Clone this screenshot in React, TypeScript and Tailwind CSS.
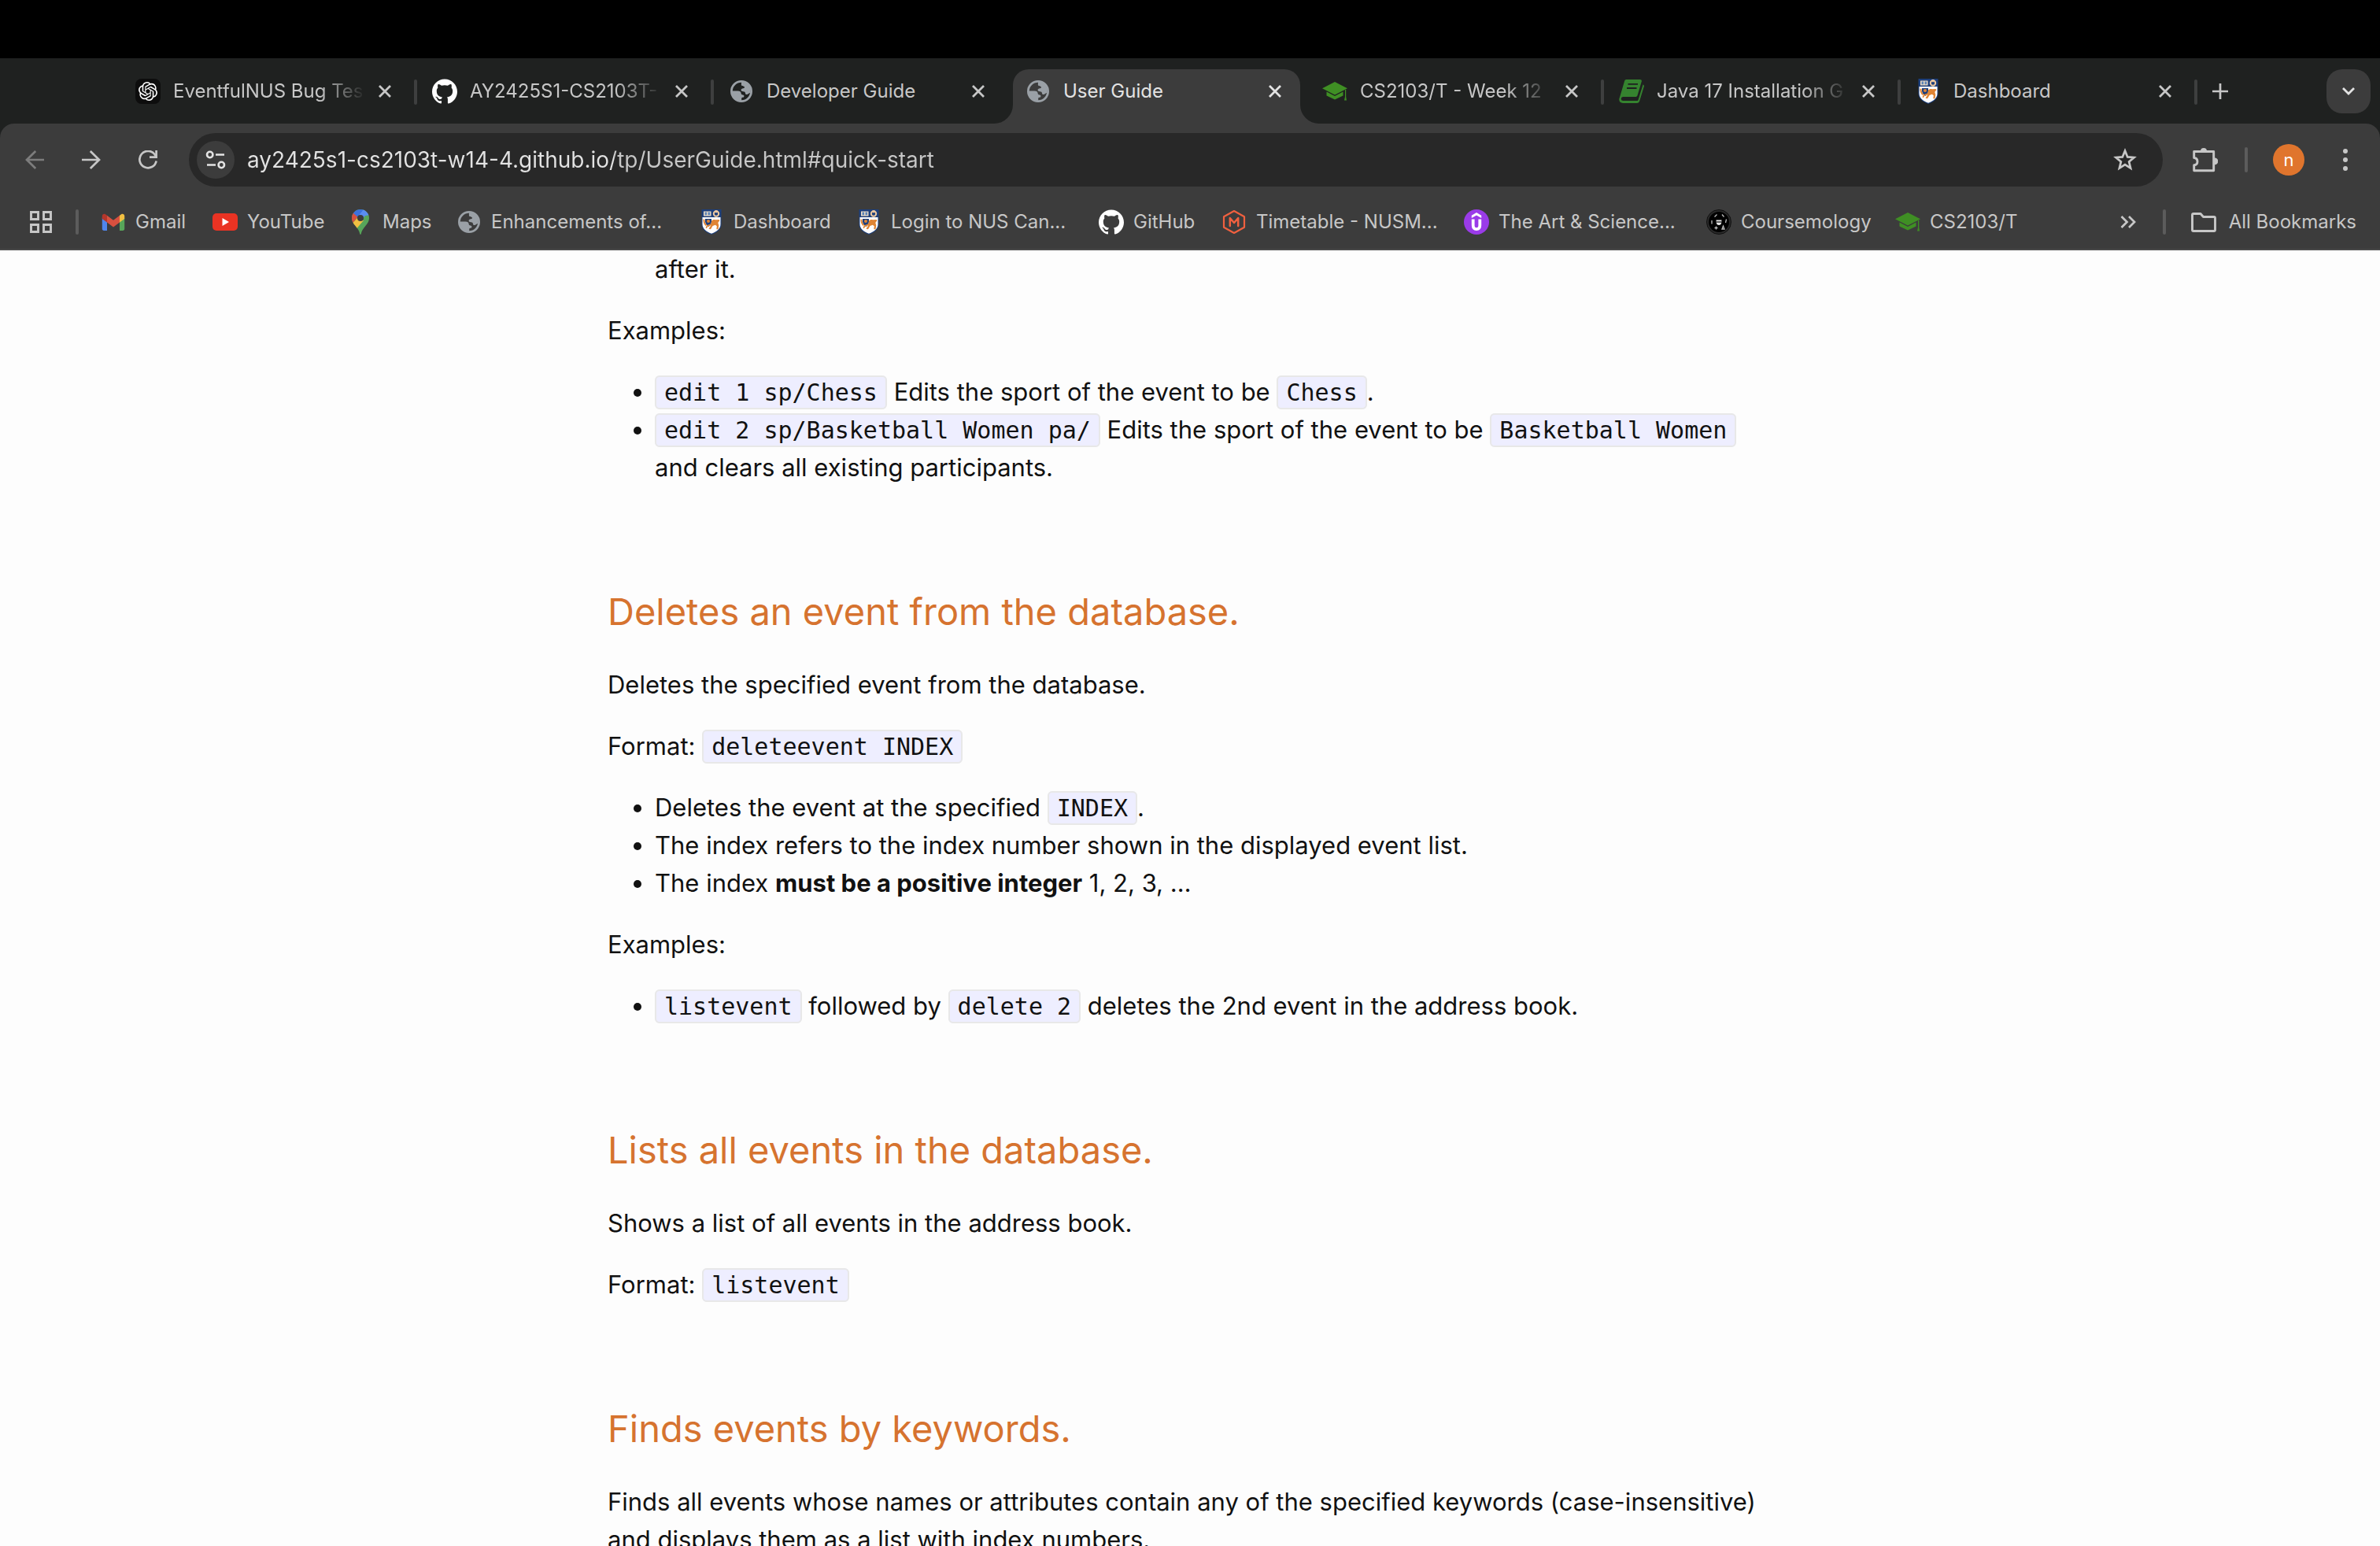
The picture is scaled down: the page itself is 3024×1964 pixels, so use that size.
import type { ReactNode } from "react";
import { SiOpenai, SiGithub } from "react-icons/si";

function GlobeIcon() {
  return (
    <svg viewBox="0 0 28 28" className="size-7 text-[#9aa0a6]" aria-hidden="true">
      <circle cx="14" cy="14" r="12.6" fill="none" stroke="currentColor" strokeWidth="2.8" />
      <path
        fill="currentColor"
        d="M14 3.5c-.2 1.500-.3 2.600.6 3.400 1 .8 2.600.4 3.200 1.300.5 1-.3 2-1.600 2.100-1.600.1-2.600.9-2.600 2.200 0 1.200 1 1.700 2.700 1.700 1.800 0 2.500.8 2.700 2.200.2 1.300 1 1.800 2.300 1.500 1.500-.4 2-1.600 4.200-1.900C27 8 21 1 14 2.200Z"
      />
      <path
        fill="currentColor"
        d="M2 13.600h7.600c2.400 0 3.900 1.200 4.100 3.200.1 1.200.8 1.700 2 1.700 1.300 0 1.900.7 1.700 2-.1.900-.8 1.300-1.700 1.300-1 0-1.500.5-1.500 1.500v3.200C7 27 1.500 21 2 13.600Z"
      />
    </svg>
  );
}

function ChatIcon() {
  return (
    <span className="flex size-8 items-center justify-center rounded-lg bg-[#0d0d0d]">
      <SiOpenai className="size-6 text-white" aria-hidden="true" />
    </span>
  );
}

function GitHubIcon() {
  return <SiGithub className="size-8 text-white" aria-hidden="true" />;
}

function CapIcon() {
  return (
    <svg viewBox="0 0 32 32" className="size-8" fill="#3f8f24" aria-hidden="true">
      <path d="M16 4 32 12.200 16 20.500 0 12.200Z" />
      <path d="M5.500 16.500 16 22l10.500-5.500v5L16 26.500 5.500 21.500Z" />
      <path d="M29 14h1.200v9l.8 4.500h-3l1-4.500Z" />
    </svg>
  );
}

function BookIcon() {
  return (
    <svg viewBox="0 0 32 32" className="size-8" aria-hidden="true">
      <path
        fill="#35832f"
        d="M9.500 1h17.300c1.500 0 2.400 1 2 2.500l-5.300 17.700c-.4 1.200-1.200 1.800-2.500 1.800H5.500c-1.700 0-2.700 1-2.700 2.500 0 1.700 1 2.500 2.700 2.500h17.300c1 0 1.500-.4 1.800-1.300L30.500 7.500c1.300.5 1.700 1.300 1.300 2.600l-5.500 18c-.5 1.900-1.700 2.900-3.500 2.900H5C2 31 0 28.800.3 26c0-1 .4-1.800.8-2.800L7 3.200C7.400 1.700 8.200 1 9.500 1Z"
      />
      <path stroke="#1f2020" strokeWidth="1.800" d="M11.500 6.800h12.500M10 12h12.500" />
    </svg>
  );
}

function CrestIcon() {
  return (
    <svg viewBox="0 0 32 32" className="size-8" aria-hidden="true">
      <path fill="#1d3f7c" d="M3.500 0h25v18.500c0 6.500-4.500 10.500-12.500 13.500C8 29 3.500 25 3.500 18.500Z" />
      <path fill="#fff" d="M4.500 10h23v8.500c0 6-4.200 9.500-11.500 12.300C8.700 28 4.500 24.500 4.500 18.500Z" />
      <path fill="#eddcc6" d="M6 2.500h9.500v6H6Z" />
      <path fill="#5b83b8" d="M7.500 3.500h2.600v3.700H7.500zM11.500 3.500h2.600v3.700h-2.600z" />
      <circle cx="22" cy="5.500" r="3.200" fill="none" stroke="#eec9a0" strokeWidth="2" />
      <path fill="#eec9a0" d="M20.500 1.200h3v3h-3z" />
      <path fill="#1d3f7c" d="M8 12h8v3.500c0 2.500-1.500 4.500-3.500 6.500C10 20 8 18 8 15.500Z" />
      <circle cx="12" cy="15" r="2" fill="#df8434" />
      <path
        fill="#df8434"
        d="M5.500 12.500l2 .2c-.2 2.800.6 5 2.500 7l-1.500 1.300c-2.400-2.500-3.200-5.300-3-8.500ZM16 14.500c1.500-1.700 3.300-2 5-1.200l4.500-.2c1 .5 1 2-.2 2.400l-1 1.500 1 3.300-.8 5h-2.200l.5-4-2-1.500-3.300 1.200-2.500 4.300-2.500-.6 2.800-4.500-4 1.500-1.500 2.500-1.300-1 1.500-3c2-.8 4-1 5.500-2.300Z"
      />
    </svg>
  );
}

function GmailIcon() {
  return (
    <svg viewBox="0 0 32 32" className="size-8" aria-hidden="true">
      <path fill="#4f86ec" d="M1.800 10.500 8 15v12H4c-1.300 0-2.200-.9-2.200-2.200Z" />
      <path fill="#57a55a" d="M30.200 10.500 24 15v12h4c1.300 0 2.200-.9 2.200-2.200Z" />
      <path fill="#f1bf42" d="M24 7.800 26 6.200c2-1.300 4.200 0 4.200 2.300V12L24 16.500Z" />
      <path fill="#b3362b" d="M8 7.800 6 6.200C4 4.900 1.800 6.200 1.800 8.500V12L8 16.500Z" />
      <path fill="#d8503f" d="M8 7.800 16 13.800 24 7.800v8.700L16 22.400 8 16.500Z" />
    </svg>
  );
}

function YouTubeIcon() {
  return (
    <svg viewBox="0 0 32 32" className="size-8" aria-hidden="true">
      <rect y="5" width="32" height="22" rx="5" fill="#ea3323" />
      <path fill="#fff" d="m12.500 11 8.500 5-8.500 5Z" />
    </svg>
  );
}

function MapsIcon() {
  return (
    <svg viewBox="0 0 32 32" className="size-8" aria-hidden="true">
      <defs>
        <clipPath id="pin">
          <path d="M16 0a11 11 0 0 1 11 11c0 4.500-2.500 7.300-5 10.500S17.500 27 16.800 31c-.3 1.200-1.300 1.200-1.600 0-.7-4-2.700-6.300-5.200-9.500S5 15.500 5 11A11 11 0 0 1 16 0Z" />
        </clipPath>
      </defs>
      <g clipPath="url(#pin)">
        <path fill="#57a55a" d="M0 0h32v32H0Z" />
        <path fill="#f1bf42" d="M0 14 5.500 18 12 11l8 3L8 28 0 24Z" />
        <path fill="#d8503f" d="M0 3h8l5 6L6 17.500 0 18Z" />
        <path fill="#3b71de" d="M5 0h16l-8 10-6.500-5.500Z" />
        <path fill="#5a8df0" d="M20 0h8v7l-6 1-5 6-5-4Z" />
      </g>
      <circle cx="16" cy="11" r="4" fill="#3c3c3c" />
    </svg>
  );
}

function NusModsIcon() {
  return (
    <svg viewBox="0 0 32 32" className="size-8" fill="none" stroke="#f0603f" strokeLinejoin="round" strokeLinecap="round" aria-hidden="true">
      <path strokeWidth="2.200" d="M16 2 29 9.200v13.600L16 30 3 22.800V9.200Z" />
      <path strokeWidth="2.500" d="M10.800 21V11l5.200 6 5.200-6v10" />
    </svg>
  );
}

function UdemyIcon() {
  return (
    <svg viewBox="0 0 32 32" className="size-8" aria-hidden="true">
      <circle cx="16" cy="16" r="16" fill="#9a3be8" />
      <path fill="#fff" d="M16 4 22.200 7.800v3.200L16 7.500 9.800 11V7.800Z" />
      <path fill="none" stroke="#fff" strokeWidth="3.800" d="M11.700 12.500v7.800c0 3 1.500 4.800 4.300 4.800s4.300-1.800 4.300-4.800v-7.800" />
    </svg>
  );
}

function CoursemologyIcon() {
  return (
    <svg viewBox="0 0 32 32" className="size-8" aria-hidden="true">
      <circle cx="16" cy="16" r="15.500" fill="#2a2a2a" stroke="#111" />
      <circle cx="16" cy="16" r="13" fill="#000" />
      <path fill="#e8e8e8" d="M12.500 13.500h7l-.5 4.500c-.5 1.300-1.500 2-3 2s-2.500-.7-3-2Z" />
      <path stroke="#000" strokeWidth="1.200" d="M13 16h6" />
      <g fill="none" stroke="#bdbdbd" strokeWidth="1.300">
        <path d="M10.500 9.500l3-3M20 6.500l2.500 3M7 14v4.500M25.500 12.500l-1 4.500M20 25l1.500-4 1.500 4ZM10.500 23.500h4M12.500 21.500v4" />
      </g>
    </svg>
  );
}

function TuneIcon() {
  return (
    <svg viewBox="0 0 28 28" className="size-7" fill="none" stroke="#e3e3e3" strokeWidth="2.600" aria-hidden="true">
      <circle cx="6.700" cy="7.500" r="3.700" />
      <path d="M14 7.500h11M3 20.500h11" />
      <circle cx="21.300" cy="20.500" r="3.700" />
    </svg>
  );
}

function ArrowIcon({ flip }: { flip?: boolean }) {
  return (
    <svg viewBox="0 0 24 24" className="size-6" fill="none" stroke="currentColor" strokeWidth="2.700" aria-hidden="true">
      {flip ? <path d="M24 12H2M13.200 1 2 12l11.200 11" /> : <path d="M0 12h22M10.800 1 22 12 10.800 23" />}
    </svg>
  );
}

function ReloadIcon() {
  return (
    <svg viewBox="0 0 24 24" className="size-6" fill="none" stroke="currentColor" strokeWidth="2.700" aria-hidden="true">
      <path d="M22.600 13.500A10.700 10.700 0 1 1 20.500 5l2 3.500" />
      <path d="M22.600 0v8.700h-8.600" />
    </svg>
  );
}

function CloseIcon() {
  return (
    <svg viewBox="0 0 16 16" className="size-4" stroke="currentColor" strokeWidth="2.800" aria-hidden="true">
      <path d="M1 1l14 14M15 1 1 15" />
    </svg>
  );
}

function StarIcon() {
  return (
    <svg viewBox="0 0 32 32" className="size-8" fill="none" stroke="currentColor" strokeWidth="2.700" aria-hidden="true">
      <path d="M16 4.500 19.200 12.400 27.500 13l-6.400 5.400 2 8.200L16 22.200l-7.100 4.400 2-8.200L4.500 13l8.300-.6Z" />
    </svg>
  );
}

function PuzzleIcon() {
  return (
    <svg viewBox="0 0 32 32" className="size-8" aria-hidden="true">
      <path
        fill="none"
        stroke="currentColor"
        strokeWidth="2.900"
        strokeLinejoin="round"
        d="M3.500 5.500h23.200v24.300H1.700v-7c2.700-.2 4.300-2 4.300-4.600s-1.600-4.500-4.300-4.700V5.500Z"
      />
      <path fill="currentColor" d="M10 5a4 4 0 0 1 8 0ZM28 13.500a4.200 4.200 0 0 1 0 8.700Z" />
    </svg>
  );
}

function FolderIcon() {
  return (
    <svg viewBox="0 0 32 32" className="size-8" fill="none" stroke="currentColor" strokeWidth="2.900" strokeLinejoin="round" aria-hidden="true">
      <path d="M3 5.500h9l3.500 4H29c1 0 1.500.5 1.500 1.500v15c0 1-.5 1.500-1.500 1.500H3c-1 0-1.500-.5-1.500-1.500V7C1.500 6 2 5.500 3 5.500Z" />
    </svg>
  );
}

function AppsIcon() {
  return (
    <svg viewBox="0 0 28 28" className="size-7" fill="none" stroke="currentColor" strokeWidth="2.900" aria-hidden="true">
      <path d="M1.500 1.500h9v9h-9zM17.500 1.500h9v9h-9zM1.500 17.500h9v9h-9zM17.500 17.500h9v9h-9z" />
    </svg>
  );
}

function Flare({ side }: { side: "left" | "right" }) {
  return (
    <svg
      viewBox="0 0 24 24"
      fill="#3c3c3c"
      aria-hidden="true"
      className={side === "left" ? "absolute right-full bottom-0 size-6" : "absolute bottom-0 left-full size-6"}
    >
      {side === "left" ? <path d="M24 0v24H0A24 24 0 0 0 24 0Z" /> : <path d="M0 0v24h24A24 24 0 0 1 0 0Z" />}
    </svg>
  );
}

type TabInfo = { title: string; icon: ReactNode; active?: boolean; fade?: boolean; divider?: boolean };

const tabs: TabInfo[] = [
  { title: "EventfulNUS Bug Tes", icon: <ChatIcon />, fade: true, divider: true },
  { title: "AY2425S1-CS2103T-", icon: <GitHubIcon />, fade: true, divider: true },
  { title: "Developer Guide", icon: <GlobeIcon /> },
  { title: "User Guide", icon: <GlobeIcon />, active: true },
  { title: "CS2103/T - Week 12", icon: <CapIcon />, fade: true, divider: true },
  { title: "Java 17 Installation G", icon: <BookIcon />, fade: true, divider: true },
  { title: "Dashboard", icon: <CrestIcon />, divider: true },
];

function Tab({ title, icon, active, fade, divider }: TabInfo) {
  return (
    <li className="flex w-[377px] min-w-0 items-end gap-[5px] pr-px pl-0.5">
      <div
        className={
          active
            ? "relative flex h-[69px] min-w-0 flex-1 rounded-t-[20px] bg-[#3c3c3c] pr-6 pl-4 text-[#e3e3e3]"
            : "relative flex h-[69px] min-w-0 flex-1 pr-6 pl-4 text-[#c7c7c7]"
        }
      >
        {active && <Flare side="left" />}
        {active && <Flare side="right" />}
        <div className="flex h-14 min-w-0 flex-1 items-center">
          <span className="flex w-8 shrink-0 items-center justify-center">{icon}</span>
          <a
            href="#quick-start"
            className={
              fade
                ? "ml-4 min-w-0 flex-1 overflow-hidden whitespace-nowrap [mask-image:linear-gradient(to_right,#000_calc(100%-60px),transparent)]"
                : "ml-4 min-w-0 flex-1 overflow-hidden whitespace-nowrap"
            }
          >
            {title}
          </a>
          <button type="button" aria-label={"Close " + title} className="ml-4 shrink-0">
            <CloseIcon />
          </button>
        </div>
      </div>
      <span className={divider ? "mb-6 h-8 w-1 rounded-full bg-[#3e3f3f]" : "w-1"} />
    </li>
  );
}

const bookmarks: { title: string; icon: ReactNode; width: string }[] = [
  { title: "Gmail", icon: <GmailIcon />, width: "w-[142px]" },
  { title: "YouTube", icon: <YouTubeIcon />, width: "w-[172px]" },
  { title: "Maps", icon: <MapsIcon />, width: "w-[138px]" },
  { title: "Enhancements of...", icon: <GlobeIcon />, width: "w-[308px]" },
  { title: "Dashboard", icon: <CrestIcon />, width: "w-[200px]" },
  { title: "Login to NUS Can...", icon: <CrestIcon />, width: "w-[308px]" },
  { title: "GitHub", icon: <GitHubIcon />, width: "w-[156px]" },
  { title: "Timetable - NUSM...", icon: <NusModsIcon />, width: "w-[308px]" },
  { title: "The Art & Science...", icon: <UdemyIcon />, width: "w-[308px]" },
  { title: "Coursemology", icon: <CoursemologyIcon />, width: "w-[240px]" },
  { title: "CS2103/T", icon: <CapIcon />, width: "w-[190px]" },
];

function Code({ children }: { children: ReactNode }) {
  return (
    <code className="rounded-md border-2 border-[#e8e8e8] bg-[#eeeeff] px-2.5 py-0.5 font-['DejaVu_Sans_Mono',monospace] text-[30px] leading-none">
      {children}
    </code>
  );
}

function Heading({ children }: { children: ReactNode }) {
  return <h3 className="mt-[90px] text-[47px] leading-[78px] text-[#d6732f]">{children}</h3>;
}

function List({ children }: { children: ReactNode }) {
  return <ul className="list-disc pl-[60px]">{children}</ul>;
}

export default function App() {
  return (
    <div className="flex h-screen flex-col overflow-hidden bg-[#fdfdfd] font-['Inter',sans-serif] text-[24px]">
      <div className="h-[74px] shrink-0 bg-black" />

      <header className="shrink-0 bg-[#1f2120]">
        <nav aria-label="Tabs" className="flex h-[83px] items-end pr-3 pl-[154px] text-[#c7c7c7]">
          <ul className="flex min-w-0">
            {tabs.map((tab, i) => (
              <Tab key={i} {...tab} />
            ))}
          </ul>
          <button type="button" aria-label="New tab" className="mb-[13px] flex size-14 items-center justify-center">
            <svg viewBox="0 0 20 20" className="size-5" stroke="currentColor" strokeWidth="2.700" aria-hidden="true">
              <path d="M10 0v20M0 10h20" />
            </svg>
          </button>
          <button
            type="button"
            aria-label="Search tabs"
            className="mb-[13px] ml-auto flex size-14 items-center justify-center rounded-[20px] bg-[#3c3c3c] text-[#e3e3e3]"
          >
            <svg viewBox="0 0 16 10" className="h-2.5 w-4" fill="none" stroke="currentColor" strokeWidth="2.800" aria-hidden="true">
              <path d="M1 1l7 7 7-7" />
            </svg>
          </button>
        </nav>

        <div className="rounded-t-[18px] border-b-2 border-[#4a4a4a] bg-[#3c3c3c] text-[#c7c7c7]">
          <div className="flex items-center pt-3 pr-10">
            <div className="flex w-60 shrink-0 items-center gap-12 pl-8">
              <button type="button" aria-label="Back" disabled className="text-[#7d7d7d]">
                <ArrowIcon flip />
              </button>
              <button type="button" aria-label="Forward">
                <ArrowIcon />
              </button>
              <button type="button" aria-label="Reload">
                <ReloadIcon />
              </button>
            </div>
            <div className="flex h-[68px] min-w-0 flex-1 items-center rounded-full bg-[#282828] pr-8 pl-2.5">
              <button
                type="button"
                aria-label="View site information"
                className="flex size-12 shrink-0 items-center justify-center rounded-full bg-[#3c3c3c]"
              >
                <TuneIcon />
              </button>
              <input
                type="text"
                aria-label="Address"
                defaultValue="ay2425s1-cs2103t-w14-4.github.io/tp/UserGuide.html#quick-start"
                className="ml-4 min-w-0 flex-1 bg-[linear-gradient(to_right,#e3e3e3_466px,#c7c7c7_466px)] bg-clip-text text-[28px] text-transparent outline-none"
              />
              <button type="button" aria-label="Bookmark this page">
                <StarIcon />
              </button>
            </div>
            <button type="button" aria-label="Extensions" className="ml-[38px]">
              <PuzzleIcon />
            </button>
            <span className="ml-[34px] h-8 w-1 rounded-full bg-[#5c5c5c]" />
            <button
              type="button"
              aria-label="Profile"
              className="ml-8 flex size-10 items-center justify-center rounded-full bg-[#e0752d] text-[22px] text-white"
            >
              n
            </button>
            <button type="button" aria-label="Menu" className="ml-12">
              <svg viewBox="0 0 8 28" className="h-7 w-2" fill="currentColor" aria-hidden="true">
                <circle cx="4" cy="3" r="3" />
                <circle cx="4" cy="14" r="3" />
                <circle cx="4" cy="25" r="3" />
              </svg>
            </button>
          </div>

          <nav aria-label="Bookmarks" className="flex h-[79px] items-center pt-2.5 pr-[30px] pl-[38px]">
            <button type="button" aria-label="Apps">
              <AppsIcon />
            </button>
            <span className="ml-[30px] h-8 w-1 shrink-0 rounded-full bg-[#5c5c5c]" />
            <ul className="ml-7 flex">
              {bookmarks.map((b, i) => (
                <li key={i} className={b.width}>
                  <a href="#quick-start" className="flex items-center whitespace-nowrap">
                    <span className="mr-3 flex w-8 shrink-0 items-center justify-center">{b.icon}</span>
                    {b.title}
                  </a>
                </li>
              ))}
            </ul>
            <button type="button" aria-label="More bookmarks" className="ml-auto">
              <svg viewBox="0 0 20 16" className="h-4 w-5" fill="none" stroke="currentColor" strokeWidth="2.700" aria-hidden="true">
                <path d="M1.500 1 8.500 8l-7 7M11 1l7 7-7 7" />
              </svg>
            </button>
            <span className="ml-[34px] h-8 w-1 rounded-full bg-[#5c5c5c]" />
            <button type="button" className="ml-8 flex items-center gap-4 whitespace-nowrap">
              <FolderIcon />
              All Bookmarks
            </button>
          </nav>
        </div>
      </header>

      <main className="min-h-0 flex-1 overflow-hidden px-[60px] text-[31px] leading-[48px] text-[#111111]">
        <article className="mx-auto flex max-w-[1480px] flex-col gap-[30px]">
          <p className="pl-[60px]">after it.</p>
          <p>Examples:</p>
          <List>
            <li>
              <Code>edit 1 sp/Chess</Code> Edits the sport of the event to be <Code>Chess</Code>.
            </li>
            <li>
              <Code>edit 2 sp/Basketball Women pa/</Code> Edits the sport of the event to be <Code>Basketball Women</Code> and
              clears all existing participants.
            </li>
          </List>

          <Heading>Deletes an event from the database.</Heading>
          <p>Deletes the specified event from the database.</p>
          <p>
            Format: <Code>deleteevent INDEX</Code>
          </p>
          <List>
            <li>
              Deletes the event at the specified <Code>INDEX</Code>.
            </li>
            <li>The index refers to the index number shown in the displayed event list.</li>
            <li>
              The index <strong className="font-bold">must be a positive integer</strong> 1, 2, 3, …
            </li>
          </List>
          <p>Examples:</p>
          <List>
            <li>
              <Code>listevent</Code> followed by <Code>delete 2</Code> deletes the 2nd event in the address book.
            </li>
          </List>

          <Heading>Lists all events in the database.</Heading>
          <p>Shows a list of all events in the address book.</p>
          <p>
            Format: <Code>listevent</Code>
          </p>

          <Heading>Finds events by keywords.</Heading>
          <p>
            Finds all events whose names or attributes contain any of the specified keywords (case-insensitive) and displays
            them as a list with index numbers.
          </p>
        </article>
      </main>
    </div>
  );
}
